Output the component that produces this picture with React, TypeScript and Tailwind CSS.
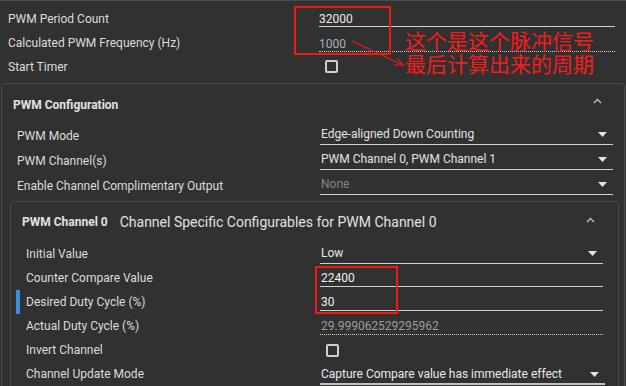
import React from "react";

const font = { fontFamily: "Roboto, 'Liberation Sans', sans-serif" };

function Tri() {
  return (
    <svg width="9" height="5" viewBox="0 0 9 5" className="shrink-0">
      <path d="M0 0 L9 0 L4.5 5 Z" fill="#e4e4e4" />
    </svg>
  );
}

function Chevron() {
  return (
    <svg width="9" height="6" viewBox="0 0 9 6" className="shrink-0">
      <path d="M1 5 L4.5 1.5 L8 5" fill="none" stroke="#bdbdbd" strokeWidth="1.4" />
    </svg>
  );
}

function Check() {
  return <div className="ml-[6px] w-[13px] h-[13px] border-2 border-[#cfcfcf] rounded-[2px]" />;
}

export default function App() {
  return (
    <div
      className="relative w-[626px] h-[386px] overflow-hidden bg-[#313131] text-[12px] text-[#dcdcdc] border-t border-[#4a4a4a]"
      style={font}
    >
      {/* Top section */}
      <div className="pt-[5px]">
        <div className="flex items-center h-[24px] pl-[8px]">
          <div className="w-[311px] pt-[2px]">PWM Period Count</div>
          <div className="w-[296px] h-full flex items-end">
            <div className="w-full h-[15px] mb-[3px] border-b border-[#cfcfcf] flex items-center leading-[14px] text-[#ececec]">32000</div>
          </div>
        </div>
        <div className="flex items-center h-[24px] pl-[8px]">
          <div className="w-[311px] pt-[2px]">Calculated PWM Frequency (Hz)</div>
          <div className="w-[296px] h-full flex items-end">
            <div className="w-full h-[16px] mb-[2px] border-b border-dotted border-[#cfcfcf] flex items-center leading-[14px] text-[#a3b2c0]">1000</div>
          </div>
        </div>
        <div className="flex items-center h-[24px] pl-[8px]">
          <div className="w-[311px] pt-[2px]">Start Timer</div>
          <Check />
        </div>
      </div>

      {/* PWM Configuration card */}
      <div className="mt-[5px] ml-[1px] w-[624px] border border-[#4a4a4a] rounded-[4px]">
        <div className="h-[38px] pt-[3px] pl-[11px] pr-[22px] flex items-center justify-between">
          <div className="font-bold text-[#e2e2e2]">PWM Configuration</div>
          <div className="-mt-[8px]"><Chevron /></div>
        </div>
        {[
          ["PWM Mode", "Edge-aligned Down Counting", "text-[#e2e2e2]"],
          ["PWM Channel(s)", "PWM Channel 0, PWM Channel 1", "text-[#e2e2e2]"],
          ["Enable Channel Complimentary Output", "None", "text-[#858585]"],
        ].map(([l, v, c]) => (
          <div key={l} className="flex items-center h-[25px] pl-[15px]">
            <div className="w-[303px] pt-[2px]">{l}</div>
            <div className="w-[293px] h-full flex items-end">
              <div className={`w-full h-[21px] mb-[2px] border-b border-[#cfcfcf] flex items-center justify-between pl-[1px] pr-[6px] ${c}`}>
                <span>{v}</span>
                <Tri />
              </div>
            </div>
          </div>
        ))}

        {/* PWM Channel 0 card */}
        <div className="mt-[4px] ml-[8px] w-[609px] border border-[#4a4a4a] rounded-[4px] pb-[10px]">
          <div className="h-[39px] pt-[1px] pl-[11px] pr-[23px] flex items-center justify-between">
            <div className="flex items-center gap-[12px]">
              <span className="font-bold text-[#e2e2e2]">PWM Channel 0</span>
              <span className="text-[14px] text-[#e2e2e2]">Channel Specific Configurables for PWM Channel 0</span>
            </div>
            <div className="-mt-[5px]"><Chevron /></div>
          </div>

          {/* Initial Value */}
          <div className="flex items-center h-[24px] pl-[5px]">
            <div className="w-[4px] h-[24px]" />
            <div className="ml-[6px] w-[294px] pt-[2px]">Initial Value</div>
            <div className="w-[283px] h-full flex items-end">
              <div className="w-full h-[21px] mb-[1px] border-b border-[#cfcfcf] flex items-center justify-between pl-[1px] pr-[6px] text-[#e8e8e8]">
                <span>Low</span>
                <Tri />
              </div>
            </div>
          </div>

          {/* Counter Compare Value */}
          <div className="flex items-center h-[24px] pl-[5px]">
            <div className="w-[4px] h-[24px]" />
            <div className="ml-[6px] w-[294px] pt-[2px]">Counter Compare Value</div>
            <div className="w-[283px] h-full flex items-end">
              <div className="w-full h-[17px] mb-[2px] border-b border-[#cfcfcf] flex items-center pl-[1px] leading-[14px] text-[#f0f0f0]">22400</div>
            </div>
          </div>

          {/* Desired Duty Cycle */}
          <div className="flex items-center h-[24px] pl-[5px]">
            <div className="w-[4px] h-[24px] mt-[2px] bg-[#3d8ee8]" />
            <div className="ml-[6px] w-[294px] pt-[2px]">Desired Duty Cycle (%)</div>
            <div className="w-[283px] h-full flex items-end">
              <div className="w-full h-[17px] mb-[2px] border-b border-[#cfcfcf] flex items-center pl-[1px] leading-[14px] text-[#f0f0f0]">30</div>
            </div>
          </div>

          {/* Actual Duty Cycle */}
          <div className="flex items-center h-[24px] pl-[5px]">
            <div className="w-[4px] h-[24px]" />
            <div className="ml-[6px] w-[294px] pt-[2px]">Actual Duty Cycle (%)</div>
            <div className="w-[283px] h-full flex items-end">
              <div className="w-full h-[17px] mb-[2px] border-b border-dotted border-[#cfcfcf] flex items-center pl-[1px] leading-[14px] text-[#9c9c9c]">29.999062529295962</div>
            </div>
          </div>

          {/* Invert Channel */}
          <div className="flex items-center h-[24px] pl-[5px]">
            <div className="w-[4px] h-[24px]" />
            <div className="ml-[6px] w-[294px] pt-[2px]">Invert Channel</div>
            <div className="mt-[2px]"><Check /></div>
          </div>

          {/* Channel Update Mode */}
          <div className="flex items-center h-[24px] pl-[5px]">
            <div className="w-[4px] h-[24px]" />
            <div className="ml-[6px] w-[294px] pt-[2px]">Channel Update Mode</div>
            <div className="w-[285px] h-full flex items-end">
              <div className="w-full h-[21px] pt-[1px] border-b-2 border-[#c4c4c4] flex items-center justify-between pl-[1px] pr-[6px] text-[#e8e8e8]">
                <span>Capture Compare value has immediate effect</span>
                <Tri />
              </div>
            </div>
          </div>
        </div>
      </div>

      {/* Red annotations overlay */}
      <div className="absolute left-[294px] top-[5px] w-[97px] h-[49px] border-2 border-[#f01818]" />
      <div className="absolute left-[315px] top-[265px] w-[83px] h-[48px] border-2 border-[#f01818]" />
      <svg className="absolute left-0 top-0" width="626" height="386" viewBox="0 0 626 386">
        <path d="M352 40 L403 64" stroke="#f01818" strokeWidth="1.2" fill="none" />
        <path d="M397.3 57.1 L403 64 L394 63.9" stroke="#f01818" strokeWidth="1.2" fill="none" />
      </svg>
      <div
        className="absolute left-[405px] top-[28px] text-[21px] leading-[23px] text-[#f41c1c]"
        style={{ fontFamily: "'Noto Sans CJK SC', sans-serif" }}
      >
        <div>这个是这个脉冲信号</div>
        <div>最后计算出来的周期</div>
      </div>
    </div>
  );
}
